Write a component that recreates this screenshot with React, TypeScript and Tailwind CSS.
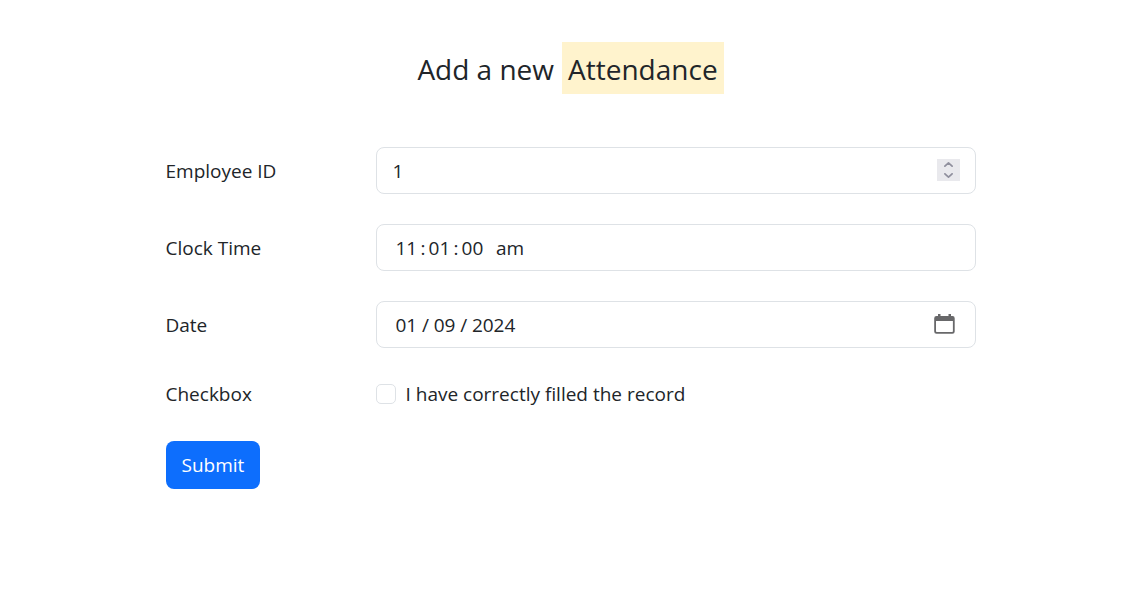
import { useState, type ReactNode } from "react";

const fieldClass =
  "flex h-[47px] items-center rounded-lg border border-[#dee2e6] bg-white pr-[15px]";
const inputClass =
  "h-full w-full min-w-0 flex-1 bg-transparent outline-none";

function Row({ id, label, children }: { id: string; label: string; children: ReactNode }) {
  return (
    <div className="grid grid-cols-[7fr_20fr] items-center">
      <label htmlFor={id}>{label}</label>
      {children}
    </div>
  );
}

export default function App() {
  const [employee, setEmployee] = useState("1");
  const step = (by: number) => setEmployee(String((Number(employee) || 0) + by));

  return (
    <main className="bg-white pt-[42px] pr-4 pl-8 font-['Open_Sans','Noto_Sans',sans-serif] text-[19px] leading-[30px] text-[#212529]">
      <form className="mx-auto max-w-[810px]" onSubmit={(e) => e.preventDefault()}>
        <h1 className="flex items-center justify-center gap-2 text-[28px] leading-[50px]">
          <span className="pt-0.5">Add a new</span>
          <mark className="bg-[#fff3cd] px-1.5 pt-0.5 text-[#212529]">Attendance</mark>
        </h1>

        <div className="mt-[53px] flex flex-col gap-[30px]">
          <Row id="employee" label="Employee ID">
            <div className={fieldClass}>
              <input
                id="employee"
                inputMode="numeric"
                className={`${inputClass} pl-4`}
                value={employee}
                onChange={(e) => setEmployee(e.target.value)}
              />
              <div className="mb-0.5 flex h-[22px] w-[23px] flex-col bg-[#e9e9ed] text-[#8f8f9d]">
                <button type="button" aria-label="Increase" className="flex flex-1 items-center justify-center" onClick={() => step(1)}>
                  <svg width="9" height="5" viewBox="0 0 9 5" fill="none" stroke="currentColor" strokeWidth="1.7" strokeLinecap="round" strokeLinejoin="round">
                    <path d="M.9 4.2 4.5.9l3.6 3.3" />
                  </svg>
                </button>
                <button type="button" aria-label="Decrease" className="flex flex-1 items-center justify-center" onClick={() => step(-1)}>
                  <svg width="9" height="5" viewBox="0 0 9 5" fill="none" stroke="currentColor" strokeWidth="1.7" strokeLinecap="round" strokeLinejoin="round">
                    <path d="M.9.8 4.5 4.1 8.1.8" />
                  </svg>
                </button>
              </div>
            </div>
          </Row>

          <Row id="clock" label="Clock Time">
            <div className={fieldClass}>
              <input id="clock" className={`${inputClass} pl-[19px]`} defaultValue={"11\u2009:\u200901\u2009:\u200900\u2002\u2009am"} />
            </div>
          </Row>

          <Row id="date" label="Date">
            <div className={fieldClass}>
              <input id="date" className={`${inputClass} pl-[19px]`} defaultValue={"01\u2005/\u200509\u2005/\u20052024"} />
              <button type="button" aria-label="Choose date" className="mr-[5px] mb-0.5 text-[#68686a]">
                <svg width="21" height="20" viewBox="0 0 21 20" className="block">
                  <path
                    fill="currentColor"
                    fillRule="evenodd"
                    d="M4 0h2.500v2h8V0H17v2h1.500A2.300 2.300 0 0 1 20.700 4.300v13.200a2.300 2.300 0 0 1-2.300 2.300H2.500A2.300 2.300 0 0 1 .2 17.500V4.300A2.300 2.300 0 0 1 2.500 2H4V0Zm-2 7v10.300c0 .5.3.8.8.8h15.300c.5 0 .8-.3.8-.8V7H2Z"
                  />
                </svg>
              </button>
            </div>
          </Row>
        </div>

        <div className="mt-[31px] grid grid-cols-[7fr_20fr] items-center">
          <span>Checkbox</span>
          <div className="flex items-center gap-2.5">
            <input
              id="confirm"
              type="checkbox"
              className="size-5 appearance-none rounded-[5px] border border-[#dee2e6] bg-white checked:border-[#0d6efd] checked:bg-[#0d6efd]"
            />
            <label htmlFor="confirm">I have correctly filled the record</label>
          </div>
        </div>

        <button type="submit" className="mt-8 h-12 rounded-lg bg-[#0d6efd] px-4 text-white">
          Submit
        </button>
      </form>
    </main>
  );
}
